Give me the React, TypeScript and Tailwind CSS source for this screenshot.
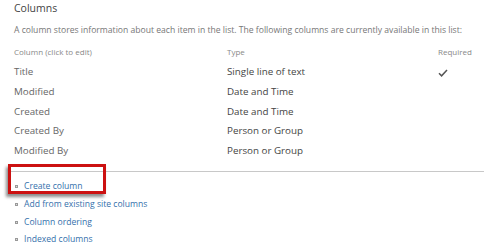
import React from "react";

const rows = [
  ["Title", "Single line of text", true],
  ["Modified", "Date and Time", false],
  ["Created", "Date and Time", false],
  ["Created By", "Person or Group", false],
  ["Modified By", "Person or Group", false],
] as const;

const links = ["Create column", "Add from existing site columns", "Column ordering", "Indexed columns"];

export default function App() {
  return (
    <div className="relative w-[484px] h-[248px] bg-white overflow-hidden" style={{ fontFamily: '"Open Sans", "Noto Sans", sans-serif' }}>
      <div className="pl-[14px]">
        <div className="h-[17px] flex items-center text-[10.5px] text-[#444]">Columns</div>
        <div className="h-[22px] flex items-center text-[8.6px] text-[#777] pt-[4px]">
          A column stores information about each item in the list. The following columns are currently available in this list:
        </div>
        <div className="h-[24px] flex items-center text-[8px] text-[#888] pt-[2px]">
          <div className="w-[213px]">Column (click to edit)</div>
          <div className="w-[211px]">Type</div>
          <div>Required</div>
        </div>
        {rows.map(([name, type, req]) => (
          <div key={name} className="h-[19.6px] flex items-center text-[9.8px]">
            <div className="w-[213px] text-[#666]">{name}</div>
            <div className="w-[211px] text-[#444]">{type}</div>
            <div className="flex items-center">
              {req && (
                <svg width="10" height="8" viewBox="0 0 10 8">
                  <path d="M1 4.2 L3.6 6.8 L9 1" fill="none" stroke="#555" strokeWidth="1.5" />
                </svg>
              )}
            </div>
          </div>
        ))}
      </div>
      <div className="ml-[10px] mt-[10px] h-px bg-[#c8c8c8]" />
      <div className="pl-[15px] pt-[6px]">
        {links.map((l) => (
          <div key={l} className="h-[17.7px] flex items-center text-[8.6px] text-[#3470ab]">
            <span className="w-[3px] h-[3px] border border-[#999] bg-[#ddd] mr-[6px]" />
            {l}
          </div>
        ))}
      </div>
      <div className="absolute left-[8px] top-[164px] w-[98px] h-[30px] border-[3px] border-[#cc1111] shadow-[-2px_3px_3px_rgba(0,0,0,0.45)]" />
    </div>
  );
}
